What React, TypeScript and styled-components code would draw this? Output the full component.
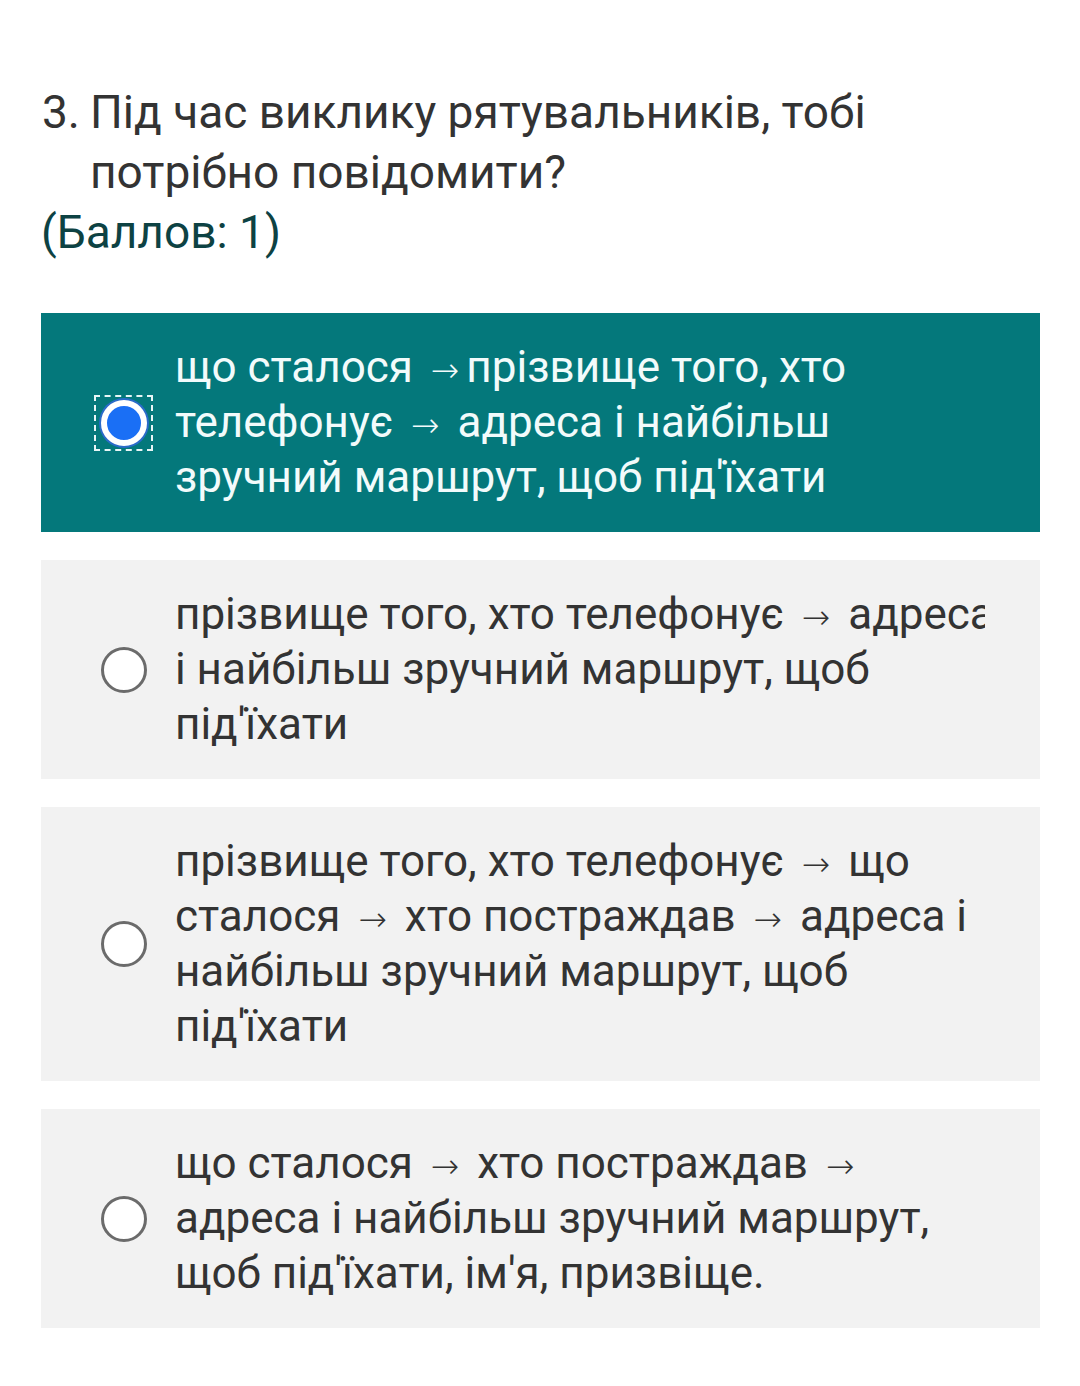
import styled, { createGlobalStyle } from 'styled-components';

const GlobalStyle = createGlobalStyle`
  body {
    margin: 0;
    background: #ffffff;
    font-family: Roboto, "Noto Sans", Arial, sans-serif;
  }
`;

const Page = styled.main`
  padding: 82px 40px 40px 41px;
  display: flex;
  flex-direction: column;
`;

const Question = styled.div`
  display: flex;
  font-size: 46px;
  line-height: 60px;
  color: #333333;
`;

const Number = styled.span`
  flex: 0 0 48px;
  padding-left: 1px;
`;

const Points = styled.div`
  font-size: 46px;
  line-height: 60px;
  color: #0d4243;
  margin-bottom: 51px;
`;

const Options = styled.div`
  display: flex;
  flex-direction: column;
  gap: 28px;
`;

const Option = styled.label<{ $selected?: boolean }>`
  display: flex;
  align-items: center;
  gap: 28px;
  padding: 27px 55px 27px 60px;
  background: ${p => (p.$selected ? '#04787b' : '#f2f2f2')};
  color: ${p => (p.$selected ? '#f2fbfb' : '#333333')};
  cursor: pointer;
`;

const RadioWrap = styled.span<{ $selected?: boolean }>`
  position: relative;
  flex: 0 0 46px;
  height: 46px;
  display: flex;
  align-items: center;
  justify-content: center;

  &::after {
    content: '';
    display: ${p => (p.$selected ? 'block' : 'none')};
    position: absolute;
    left: -7px;
    top: -5px;
    right: -6px;
    bottom: -5px;
    border: 2px dashed #e8f6f6;
  }
`;

const RadioDot = styled.span<{ $selected?: boolean }>`
  box-sizing: border-box;
  width: 46px;
  height: 46px;
  border-radius: 50%;
  background: ${p => (p.$selected ? '#1a6ff5' : '#ffffff')};
  border: ${p => (p.$selected ? '6px solid #ffffff' : '3px solid #6b6b6b')};
  box-shadow: ${p => (p.$selected ? '0 0 0 2px #2a6bc9' : 'none')};
`;

const Text = styled.span`
  flex: 1;
  min-width: 0;
  overflow: hidden;
  font-size: 44px;
  line-height: 55px;
`;

const Line = styled.span`
  display: block;
  height: 55px;
  white-space: nowrap;
`;

const Arrow = styled.span`
  font-size: 34px;
  font-weight: 200;
  line-height: 0;
  font-family: "DejaVu Sans", sans-serif;
  margin: 0 7px;
`;

const A = () => <Arrow>→</Arrow>;

type OptionData = { id: number; lines: React.ReactNode[]; selected?: boolean };

const options: OptionData[] = [
  {
    id: 1,
    selected: true,
    lines: [
      <>що сталося <A />прізвище того, хто</>,
      <>телефонує <A /> адреса і найбільш</>,
      <>зручний маршрут, щоб під'їхати</>,
    ],
  },
  {
    id: 2,
    lines: [
      <>прізвище того, хто телефонує <A /> адреса</>,
      <>і найбільш зручний маршрут, щоб</>,
      <>під'їхати</>,
    ],
  },
  {
    id: 3,
    lines: [
      <>прізвище того, хто телефонує <A /> що</>,
      <>сталося <A /> хто постраждав <A /> адреса і</>,
      <>найбільш зручний маршрут, щоб</>,
      <>під'їхати</>,
    ],
  },
  {
    id: 4,
    lines: [
      <>що сталося <A /> хто постраждав <A /></>,
      <>адреса і найбільш зручний маршрут,</>,
      <>щоб під'їхати, ім'я, призвіще.</>,
    ],
  },
];

export default function App() {
  return (
    <>
      <GlobalStyle />
      <Page>
        <Question>
          <Number>3.</Number>
          <span>
            Під час виклику рятувальників, тобі
            <br />
            потрібно повідомити?
          </span>
        </Question>
        <Points>(Баллов: 1)</Points>
        <Options>
          {options.map(o => (
            <Option key={o.id} $selected={o.selected}>
              <RadioWrap $selected={o.selected}>
                <RadioDot $selected={o.selected} />
              </RadioWrap>
              <Text>
                {o.lines.map((l, i) => (
                  <Line key={i}>{l}</Line>
                ))}
              </Text>
            </Option>
          ))}
        </Options>
      </Page>
    </>
  );
}
